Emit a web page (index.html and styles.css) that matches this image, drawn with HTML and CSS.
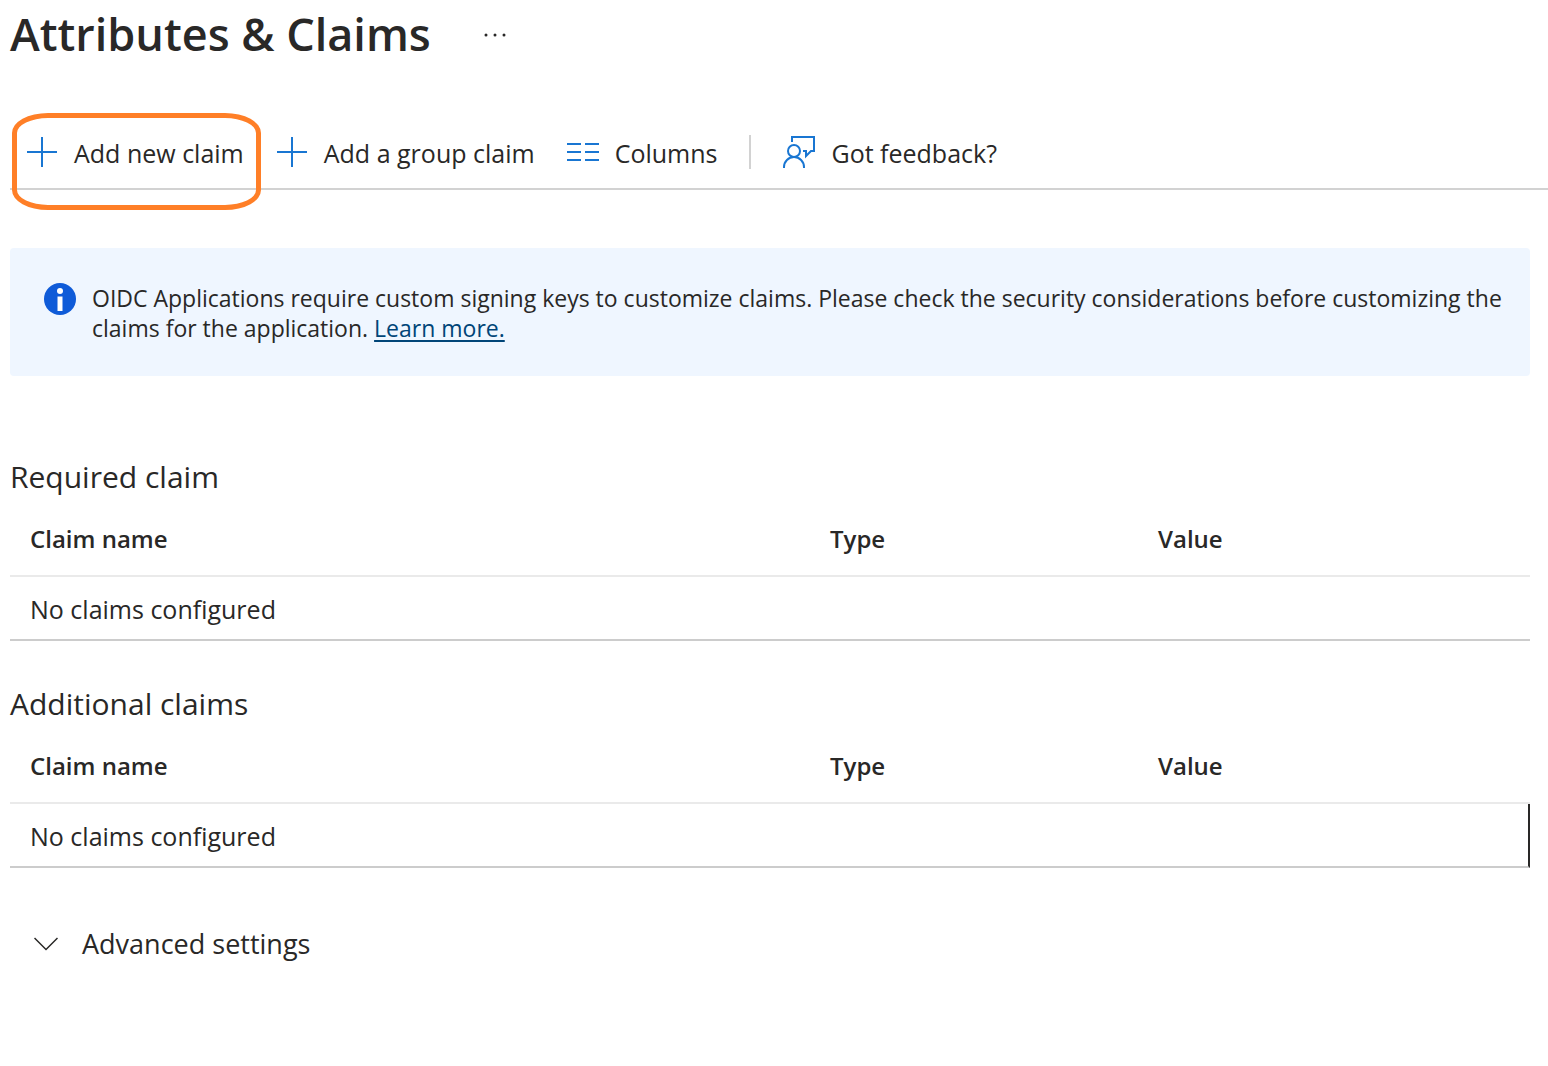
FILE: index.html
```html
<!DOCTYPE html>
<html lang="en">
<head>
<meta charset="utf-8">
<meta name="viewport" content="width=device-width, initial-scale=1">
<title>Attributes &amp; Claims</title>
<link rel="stylesheet" href="styles.css">
</head>
<body>
<header class="page-header">
  <h1 class="page-title">Attributes &amp; Claims</h1>
  <button class="more" type="button" aria-label="More options">
    <svg width="24" height="4" viewBox="0 0 24 4" fill="currentColor" aria-hidden="true"><circle cx="3" cy="2" r="1.5"/><circle cx="12" cy="2" r="1.5"/><circle cx="21" cy="2" r="1.5"/></svg>
  </button>
</header>

<div class="toolbar" role="toolbar" aria-label="Claims commands">
  <button class="command command--highlighted" type="button">
    <svg class="icon" viewBox="0 0 32 32" aria-hidden="true"><path d="M16 1v30M1 16h30"/></svg>
    <span class="command-label">Add new claim</span>
  </button>
  <button class="command" type="button">
    <svg class="icon" viewBox="0 0 32 32" aria-hidden="true"><path d="M16 1v30M1 16h30"/></svg>
    <span class="command-label">Add a group claim</span>
  </button>
  <button class="command" type="button">
    <svg class="icon" viewBox="0 0 32 32" aria-hidden="true"><path d="M0 8h14M18 8h14M0 16h14M18 16h14M0 24h14M18 24h14"/></svg>
    <span class="command-label">Columns</span>
  </button>
  <span class="divider" role="separator"></span>
  <button class="command" type="button">
    <svg class="icon" viewBox="0 0 32 32" aria-hidden="true"><path d="M9 6V1h22v14h-3l-5 5v-5h-3"/><circle cx="11" cy="15" r="6"/><path d="M1 32v-1a10 10 0 0 1 20 0v1"/></svg>
    <span class="command-label">Got feedback?</span>
  </button>
</div>

<main class="content">
  <section class="notice">
    <svg class="notice-icon" viewBox="0 0 32 32" aria-hidden="true"><circle cx="16" cy="16" r="16" fill="#0f5bd8"/><circle cx="16" cy="8" r="3" fill="#fff"/><path d="M13.500 13.500h5v14.500h-5z" fill="#fff"/></svg>
    <p class="notice-text">OIDC Applications require custom signing keys to customize claims. Please check the security considerations before customizing the claims for the application. <a href="#learn-more">Learn more.</a></p>
  </section>

  <section class="claims">
    <h2 class="claims-title" id="required">Required claim</h2>
    <table class="claims-table" aria-labelledby="required">
      <thead>
        <tr><th class="col-name" scope="col">Claim name</th><th class="col-type" scope="col">Type</th><th scope="col">Value</th></tr>
      </thead>
      <tbody>
        <tr><td colspan="3">No claims configured</td></tr>
      </tbody>
    </table>
  </section>

  <section class="claims">
    <h2 class="claims-title" id="additional">Additional claims</h2>
    <table class="claims-table" aria-labelledby="additional">
      <thead>
        <tr><th class="col-name" scope="col">Claim name</th><th class="col-type" scope="col">Type</th><th scope="col">Value</th></tr>
      </thead>
      <tbody>
        <tr><td class="cell--marked" colspan="3">No claims configured</td></tr>
      </tbody>
    </table>
  </section>

  <button class="advanced" type="button" aria-expanded="false">
    <svg width="24" height="14" viewBox="0 0 24 14" fill="none" stroke="currentColor" stroke-width="1.500" aria-hidden="true"><path d="M.5 1L12 12.500 23.500 1"/></svg>
    <span>Advanced settings</span>
  </button>
</main>
</body>
</html>
```
FILE: styles.css
```css
* {
  box-sizing: border-box;
}

body {
  margin: 0;
  background: #fff;
  color: #292827;
  font-family: "Open Sans", "Segoe UI", sans-serif;
  font-size: 25px;
  line-height: 32px;
}

button {
  padding: 0;
  border: 0;
  background: none;
  color: inherit;
  font: inherit;
  cursor: pointer;
}

svg {
  display: block;
  flex: none;
}

.page-header {
  display: flex;
  align-items: center;
  gap: 44px;
  padding: 2px 10px 0;
}

.page-title {
  margin: 0;
  font-size: 45px;
  line-height: 64px;
  font-weight: 600;
}

.more {
  padding: 10px 8px 8px;
}

.toolbar {
  display: flex;
  align-items: center;
  margin: 50px 0 0 10px;
  padding-top: 2px;
  border-bottom: 2px solid #d2d2d2;
}

.command {
  position: relative;
  display: flex;
  align-items: center;
  gap: 16px;
  height: 70px;
  padding: 0 16px 2px;
  white-space: nowrap;
}

.command-label {
  padding-top: 2px;
}

.icon {
  width: 32px;
  height: 32px;
  fill: none;
  stroke: #1976d2;
  stroke-width: 2;
}

/* Hand-drawn style ring around the primary command */
.command--highlighted::after {
  content: "";
  position: absolute;
  inset: -5px -1px -22px 2px;
  border: 5px solid #ff7f27;
  border-radius: 36px / 20px;
  pointer-events: none;
}

.divider {
  width: 2px;
  height: 34px;
  margin: 0 16px 2px;
  background: #d2d2d2;
}

.content {
  padding: 58px 18px 40px 10px;
}

.notice {
  display: flex;
  gap: 16px;
  padding: 35px 16px 33px 34px;
  border-radius: 4px;
  background: #eff6ff;
}

.notice-icon {
  width: 32px;
  height: 32px;
}

.notice-text {
  margin: 0;
  font-size: 23px;
  line-height: 30px;
}

.notice-text a {
  color: #004578;
  text-decoration-thickness: 2px;
  text-underline-offset: 3px;
}

.claims {
  margin-top: 43px;
}

.notice + .claims {
  margin-top: 81px;
}

.claims-title {
  margin: 0 0 10px;
  font-size: 30px;
  line-height: 40px;
  font-weight: 400;
}

.claims-table {
  width: 100%;
  border-spacing: 0;
  table-layout: fixed;
}

.claims-table th,
.claims-table td {
  padding: 0 20px;
  text-align: left;
}

.claims-table th {
  height: 70px;
  padding-bottom: 4px;
  border-bottom: 2px solid #eaeaea;
  font-size: 24px;
  font-weight: 600;
}

.claims-table td {
  height: 64px;
  padding-top: 2px;
  border-bottom: 2px solid #ccc;
}

.claims-table .cell--marked {
  border-right: 2px solid #292827;
}

.col-name {
  width: 800px;
}

.col-type {
  width: 328px;
}

.advanced {
  display: flex;
  align-items: center;
  gap: 24px;
  margin-top: 56px;
  padding: 0 24px;
  font-size: 27px;
  line-height: 40px;
}
```
